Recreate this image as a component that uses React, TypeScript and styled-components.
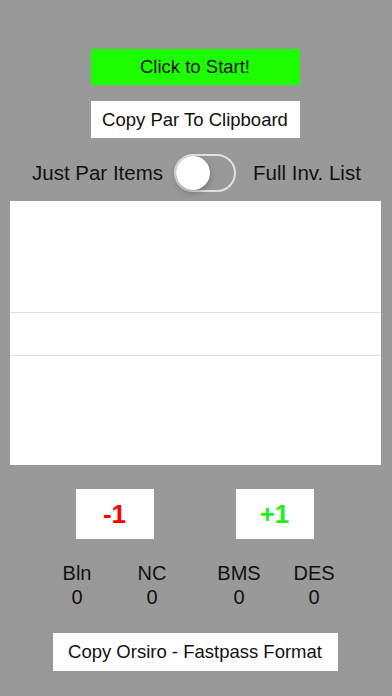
import React from 'react'
import styled, { createGlobalStyle } from 'styled-components'

const GlobalStyle = createGlobalStyle`
  html, body {
    margin: 0;
    padding: 0;
    background: #999999;
  }
  body {
    font-family: 'Liberation Sans', Arial, sans-serif;
    color: #111;
  }
`

const Screen = styled.main`
  width: 392px;
  height: 696px;
  background: #999999;
  display: flex;
  flex-direction: column;
  align-items: center;
  padding: 49px 2px 0 0;
  box-sizing: border-box;
`

const Button = styled.div<{ $bg?: string; $w: number; $h: number; $mt?: number }>`
  width: ${(p) => p.$w}px;
  height: ${(p) => p.$h}px;
  margin-top: ${(p) => p.$mt ?? 0}px;
  background: ${(p) => p.$bg ?? '#ffffff'};
  display: flex;
  align-items: center;
  justify-content: center;
  font-size: 18.5px;
  color: #111;
  white-space: nowrap;
`

const ToggleRow = styled.div`
  margin-top: 16px;
  width: 100%;
  height: 38px;
  display: flex;
  align-items: center;
  padding-left: 32px;
  box-sizing: border-box;
  font-size: 20.5px;
`

const Label = styled.span`
  white-space: nowrap;
`

const Switch = styled.div`
  position: relative;
  width: 62px;
  height: 38px;
  margin: 0 17px 0 11px;
  border-radius: 19px;
  border: 2px solid #e2e2e2;
  box-sizing: border-box;
  flex-shrink: 0;
`

const Knob = styled.div`
  position: absolute;
  top: 0;
  left: 0;
  width: 34px;
  height: 34px;
  border-radius: 50%;
  background: #ffffff;
  box-shadow: 0 3px 6px rgba(0, 0, 0, 0.25), 0 0 1px rgba(0, 0, 0, 0.2);
`

const Table = styled.div`
  margin-top: 9px;
  width: 371px;
  height: 264px;
  background: #ffffff;
  display: flex;
  flex-direction: column;
`

const Cell = styled.div<{ $h: number }>`
  height: ${(p) => p.$h}px;
  flex-shrink: 0;
  border-bottom: 1px solid #e0e0e0;
`

const StepRow = styled.div`
  margin-top: 24px;
  display: flex;
  gap: 82px;
  margin-left: -1px;
`

const StepButton = styled.div<{ $color: string }>`
  width: 78px;
  height: 50px;
  background: #ffffff;
  display: flex;
  align-items: center;
  justify-content: center;
  font-size: 26px;
  font-weight: bold;
  color: ${(p) => p.$color};
`

const Counts = styled.div`
  margin-top: 22px;
  display: flex;
  gap: 27px;
  margin-left: 1px;
`

const CountGroup = styled.div`
  display: flex;
  gap: 15px;
`

const Count = styled.div`
  width: 60px;
  display: flex;
  flex-direction: column;
  align-items: center;
  font-size: 20px;
  line-height: 24px;
`

const counts = [
  [
    { name: 'Bln', value: 0 },
    { name: 'NC', value: 0 },
  ],
  [
    { name: 'BMS', value: 0 },
    { name: 'DES', value: 0 },
  ],
]

export default function App() {
  return (
    <>
      <GlobalStyle />
      <Screen>
        <Button $bg="#1dff00" $w={209} $h={36}>Click to Start!</Button>
        <Button $w={209} $h={37} $mt={16}>Copy Par To Clipboard</Button>

        <ToggleRow>
          <Label>Just Par Items</Label>
          <Switch>
            <Knob />
          </Switch>
          <Label>Full Inv. List</Label>
        </ToggleRow>

        <Table>
          <Cell $h={111} />
          <Cell $h={42} />
        </Table>

        <StepRow>
          <StepButton $color="#ff0000">-1</StepButton>
          <StepButton $color="#1ef21e">+1</StepButton>
        </StepRow>

        <Counts>
          {counts.map((group, i) => (
            <CountGroup key={i}>
              {group.map((c) => (
                <Count key={c.name}>
                  <span>{c.name}</span>
                  <span>{c.value}</span>
                </Count>
              ))}
            </CountGroup>
          ))}
        </Counts>

        <Button $w={285} $h={38} $mt={24}>Copy Orsiro - Fastpass Format</Button>
      </Screen>
    </>
  )
}
